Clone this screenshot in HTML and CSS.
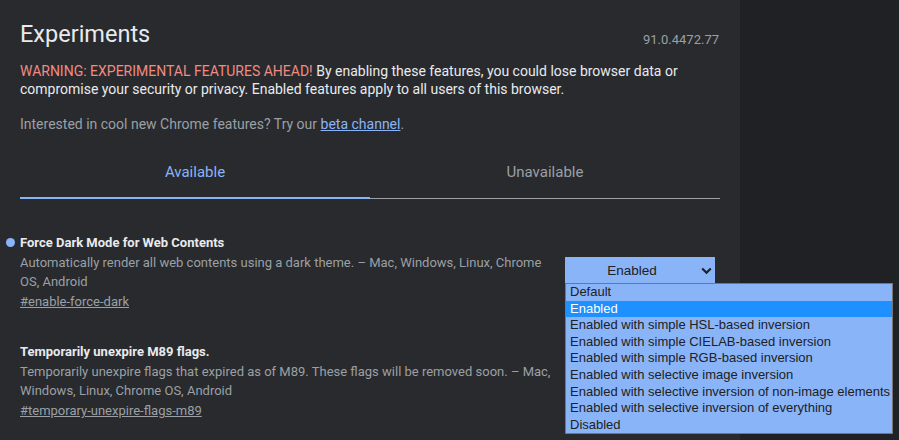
FILE: index.html
```html
<!DOCTYPE html>
<html>
<head>
<meta charset="utf-8">
<link rel="stylesheet" href="styles.css">
</head>
<body>
<div class="page">
  <main class="panel">
    <header class="header">
      <h1 class="title">Experiments</h1>
      <span class="version">91.0.4472.77</span>
    </header>
    <p class="warning"><span class="warn-red">WARNING: EXPERIMENTAL FEATURES AHEAD!</span> By enabling these features, you could lose browser data or compromise your security or privacy. Enabled features apply to all users of this browser.</p>
    <p class="beta">Interested in cool new Chrome features? Try our <a class="beta-link" href="#">beta channel</a>.</p>
    <nav class="tabs">
      <div class="tab tab-active">Available</div>
      <div class="tab">Unavailable</div>
    </nav>
    <section class="flags">
      <div class="flag">
        <div class="flag-info">
          <h2 class="flag-name"><span class="dot"></span>Force Dark Mode for Web Contents</h2>
          <p class="flag-desc">Automatically render all web contents using a dark theme. – Mac, Windows, Linux, Chrome OS, Android</p>
          <a class="flag-link" href="#">#enable-force-dark</a>
        </div>
        <div class="flag-control">
          <div class="select">
            <span class="select-value">Enabled</span>
            <svg class="chev" width="11" height="8" viewBox="0 0 11 8"><path d="M1.2 1.5 L5.5 5.8 L9.8 1.5" fill="none" stroke="#202124" stroke-width="2.2"/></svg>
            <ul class="options">
              <li class="opt">Default</li>
              <li class="opt opt-sel">Enabled</li>
              <li class="opt">Enabled with simple HSL-based inversion</li>
              <li class="opt">Enabled with simple CIELAB-based inversion</li>
              <li class="opt">Enabled with simple RGB-based inversion</li>
              <li class="opt">Enabled with selective image inversion</li>
              <li class="opt">Enabled with selective inversion of non-image elements</li>
              <li class="opt">Enabled with selective inversion of everything</li>
              <li class="opt">Disabled</li>
            </ul>
          </div>
        </div>
      </div>
      <div class="flag">
        <div class="flag-info">
          <h2 class="flag-name">Temporarily unexpire M89 flags.</h2>
          <p class="flag-desc">Temporarily unexpire flags that expired as of M89. These flags will be removed soon. – Mac, Windows, Linux, Chrome OS, Android</p>
          <a class="flag-link" href="#">#temporary-unexpire-flags-m89</a>
        </div>
        <div class="flag-control"></div>
      </div>
    </section>
  </main>
</div>
</body>
</html>
```
FILE: styles.css
```css
html, body {
  margin: 0;
  padding: 0;
  background: #202124;
  height: 100%;
  overflow: hidden;
}
.page {
  display: flex;
  height: 100%;
}
.panel {
  width: 740px;
  background: #292a2d;
  padding: 16px 20px 0 20px;
  box-sizing: border-box;
  font-family: Roboto, "Liberation Sans", sans-serif;
  color: #e8eaed;
}
.header {
  display: flex;
  justify-content: space-between;
  align-items: flex-end;
}
.title {
  margin: 0;
  font-size: 23.5px;
  font-weight: 400;
  line-height: 36px;
  color: #e8eaed;
}
.version {
  font-size: 13px;
  line-height: 15px;
  margin-bottom: 5px;
  color: #9aa0a6;
  margin-right: 1px;
}
.warning {
  margin: 10px 0 0 0;
  font-size: 14px;
  line-height: 18px;
  color: #e8eaed;
  width: 680px;
}
.warn-red {
  color: #f28b82;
}
.beta {
  margin: 17px 0 0 0;
  font-size: 14px;
  line-height: 18px;
  color: #9aa0a6;
}
.beta-link {
  color: #8ab4f8;
}
.tabs {
  display: flex;
  margin-top: 24px;
}
.tab {
  flex: 1;
  text-align: center;
  font-size: 15px;
  color: #9aa0a6;
  height: 41px;
  line-height: 30px;
  border-bottom: 1px solid #9aa0a6;
}
.tab-active {
  color: #8ab4f8;
  border-bottom: 2px solid #8ab4f8;
  height: 40px;
}
.flags {
  margin-top: 35px;
}
.flag {
  display: flex;
  margin-bottom: 32px;
}
.flag-info {
  width: 535px;
}
.flag-name {
  position: relative;
  margin: 0;
  font-size: 13px;
  font-weight: 700;
  line-height: 18px;
  color: #e8eaed;
}
.dot {
  position: absolute;
  left: -14px;
  top: 4px;
  width: 9px;
  height: 9px;
  border-radius: 50%;
  background: #8ab4f8;
}
.flag-desc {
  margin: 1px 0 0 0;
  font-size: 13px;
  line-height: 19px;
  color: #9aa0a6;
}
.flag-link {
  display: inline-block;
  margin-top: 1px;
  font-size: 13px;
  line-height: 18px;
  color: #9aa0a6;
}
.flag-control {
  margin-left: 10px;
  padding-top: 23px;
}
.select {
  position: relative;
  width: 150px;
  height: 26px;
  background: #8ab4f8;
  display: flex;
  align-items: center;
  justify-content: center;
  font-family: "Liberation Sans", Arial, sans-serif;
  font-size: 13.5px;
  color: #202124;
}
.select-value {
  margin-left: -16px;
}
.chev {
  position: absolute;
  right: 3px;
  top: 10px;
}
.options {
  position: absolute;
  left: 0;
  top: 26px;
  width: 326px;
  margin: 0;
  padding: 0;
  list-style: none;
  background: #8ab4f8;
  border: 1px solid #767676;
  z-index: 2;
}
.opt {
  height: 16.6px;
  line-height: 16.6px;
  padding-left: 4px;
  font-size: 13px;
  color: #202124;
  white-space: nowrap;
}
.opt-sel {
  background: #1e90ff;
  color: #ffffff;
}
```
